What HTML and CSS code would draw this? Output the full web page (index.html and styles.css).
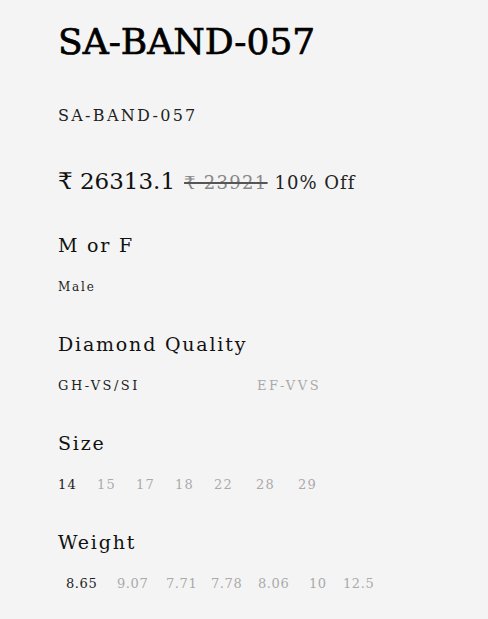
FILE: index.html
```html
<!DOCTYPE html>
<html>
<head>
<meta charset="utf-8">
<link rel="stylesheet" href="styles.css">
</head>
<body>
<div class="product">
  <h1 class="title">SA-BAND-057</h1>
  <div class="sku">SA-BAND-057</div>
  <div class="price">
    <span class="now">₹ 26313.1</span>
    <span class="was">₹ 23921</span>
    <span class="off">10% Off</span>
  </div>
  <section class="opt">
    <h2 class="label">M or F</h2>
    <div class="choices"><span class="c sel small">Male</span></div>
  </section>
  <section class="opt">
    <h2 class="label">Diamond Quality</h2>
    <div class="choices dq"><span class="c sel">GH-VS/SI</span><span class="c">EF-VVS</span></div>
  </section>
  <section class="opt">
    <h2 class="label">Size</h2>
    <div class="choices size"><span class="c sel">14</span><span class="c">15</span><span class="c">17</span><span class="c">18</span><span class="c">22</span><span class="c">28</span><span class="c">29</span></div>
  </section>
  <section class="opt">
    <h2 class="label">Weight</h2>
    <div class="choices weight"><span class="c sel">8.65</span><span class="c">9.07</span><span class="c">7.71</span><span class="c">7.78</span><span class="c">8.06</span><span class="c">10</span><span class="c">12.5</span></div>
  </section>
</div>
</body>
</html>
```
FILE: styles.css
```css
html, body { margin: 0; padding: 0; background: #f4f4f4; }
body { font-family: "DejaVu Serif", serif; color: #111; }
.product { padding: 20px 0 0 58px; }
.title { margin: 0; font-size: 36px; font-weight: normal; -webkit-text-stroke: 0.7px #000; line-height: 44px; color: #000; }
.sku { margin-top: 42px; font-size: 16px; letter-spacing: 2.3px; line-height: 20px; color: #222; }
.price { margin-top: 40px; display: flex; align-items: baseline; line-height: 30px; }
.now { font-size: 23px; color: #111; }
.was { margin-left: 9px; font-size: 18px; letter-spacing: 1.3px; color: #888; text-decoration: line-through; text-decoration-color: #555; text-decoration-thickness: 2px; }
.off { margin-left: 7px; font-size: 18px; color: #222; letter-spacing: 1px; }
.opt { margin-top: 35px; }
.opt:first-of-type { margin-top: 34px; }
.label { margin: 0; font-size: 19px; font-weight: normal; letter-spacing: 1.8px; line-height: 26px; color: #111; }
.choices { margin-top: 20px; display: flex; font-size: 13px; letter-spacing: 1.2px; line-height: 18px; color: #aaa; }
.c.sel { color: #222; }
.c.small { font-size: 12px; letter-spacing: 1.8px; }
.dq { letter-spacing: 2.5px; }
.dq .c:first-child { width: 199px; }
.size .c { width: 39px; }
.size .c:nth-child(5) { width: 42px; }
.size .c:nth-child(6) { width: 42px; }
.weight { padding-left: 8px; letter-spacing: 0.6px; }
.weight .c:nth-child(1) { width: 51px; }
.weight .c:nth-child(2) { width: 49px; }
.weight .c:nth-child(3) { width: 45px; }
.weight .c:nth-child(4) { width: 47px; }
.weight .c:nth-child(5) { width: 51px; }
.weight .c:nth-child(6) { width: 34px; }
```
